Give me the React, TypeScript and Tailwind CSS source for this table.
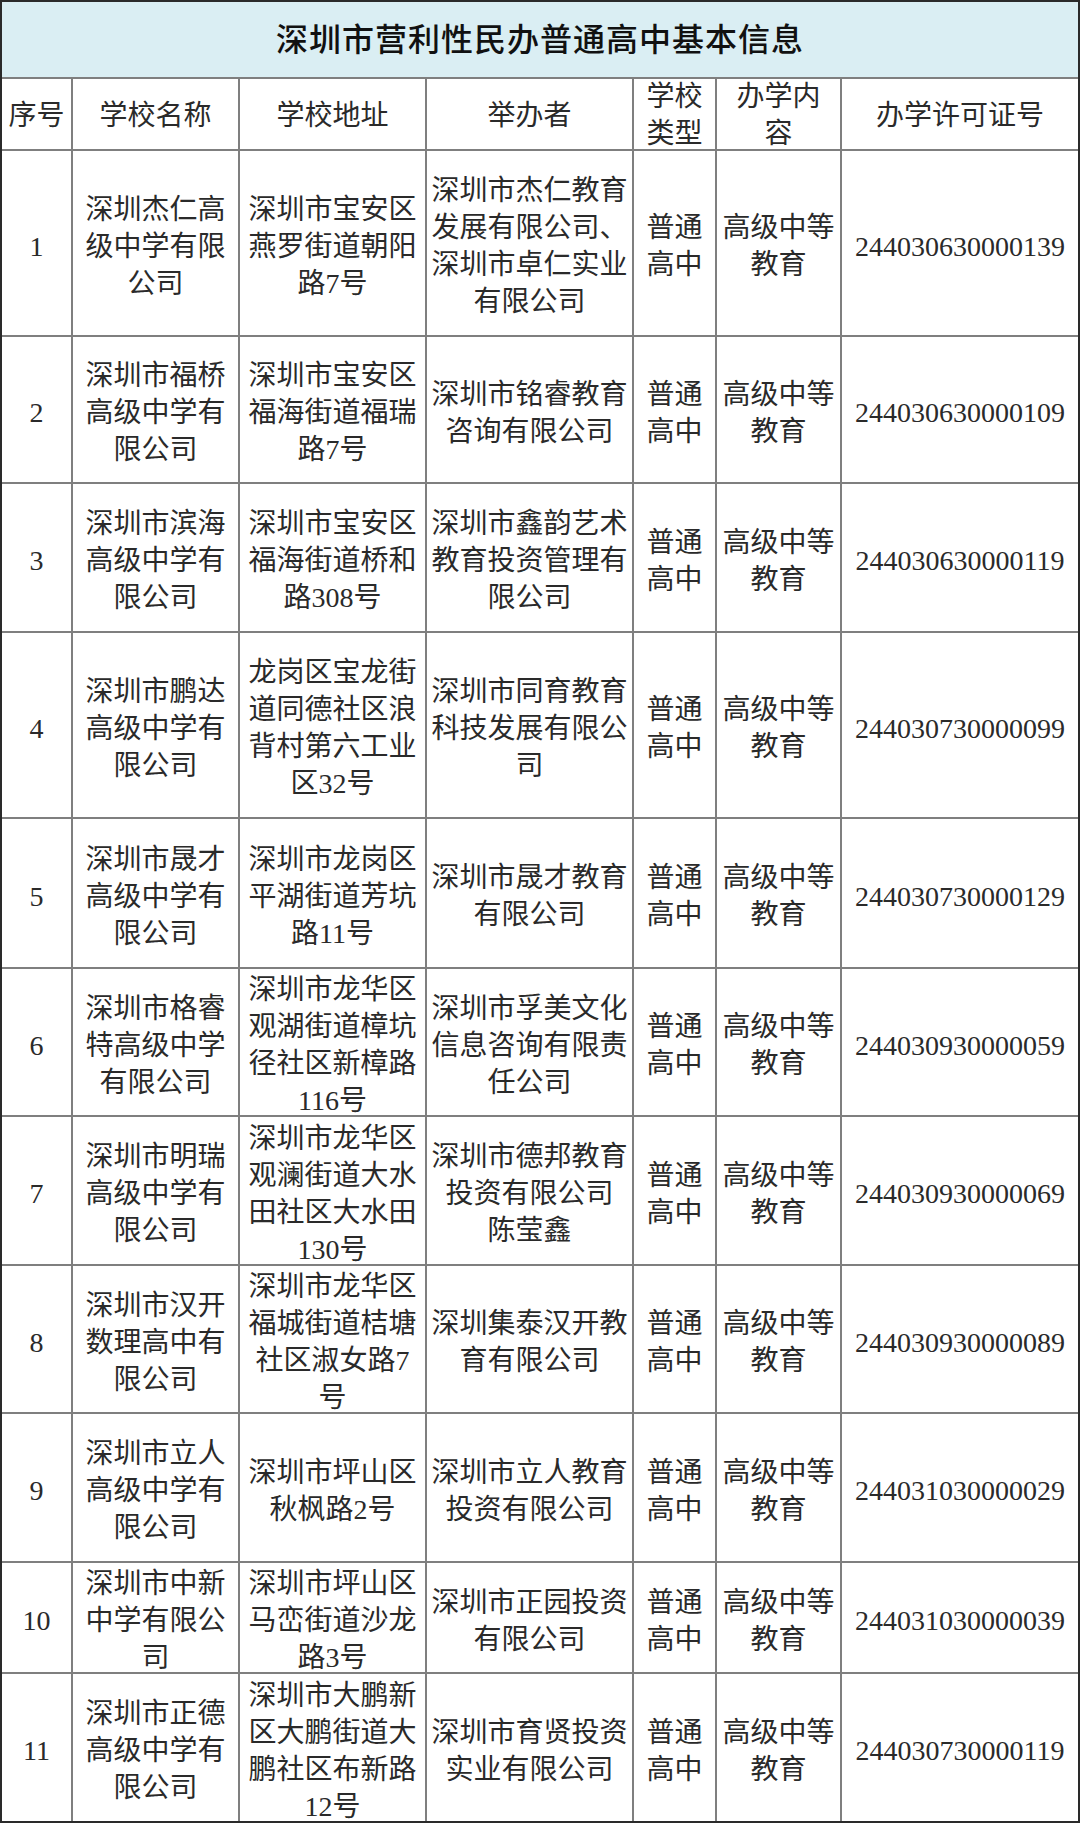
const cols = "grid grid-rows-1 grid-cols-[71px_167px_187px_207px_83px_125px_236px]";

type Row = {
  h: string;
  no: string;
  name: string[];
  addr: string[];
  host: string[];
  license: string;
};

const rows: Row[] = [
  {
    h: "h-[186px]",
    no: "1",
    name: ["深圳杰仁高", "级中学有限", "公司"],
    addr: ["深圳市宝安区", "燕罗街道朝阳", "路7号"],
    host: ["深圳市杰仁教育", "发展有限公司、", "深圳市卓仁实业", "有限公司"],
    license: "244030630000139",
  },
  {
    h: "h-[147px]",
    no: "2",
    name: ["深圳市福桥", "高级中学有", "限公司"],
    addr: ["深圳市宝安区", "福海街道福瑞", "路7号"],
    host: ["深圳市铭睿教育", "咨询有限公司"],
    license: "244030630000109",
  },
  {
    h: "h-[149px]",
    no: "3",
    name: ["深圳市滨海", "高级中学有", "限公司"],
    addr: ["深圳市宝安区", "福海街道桥和", "路308号"],
    host: ["深圳市鑫韵艺术", "教育投资管理有", "限公司"],
    license: "244030630000119",
  },
  {
    h: "h-[186px]",
    no: "4",
    name: ["深圳市鹏达", "高级中学有", "限公司"],
    addr: ["龙岗区宝龙街", "道同德社区浪", "背村第六工业", "区32号"],
    host: ["深圳市同育教育", "科技发展有限公", "司"],
    license: "244030730000099",
  },
  {
    h: "h-[150px]",
    no: "5",
    name: ["深圳市晟才", "高级中学有", "限公司"],
    addr: ["深圳市龙岗区", "平湖街道芳坑", "路11号"],
    host: ["深圳市晟才教育", "有限公司"],
    license: "244030730000129",
  },
  {
    h: "h-[148px]",
    no: "6",
    name: ["深圳市格睿", "特高级中学", "有限公司"],
    addr: ["深圳市龙华区", "观湖街道樟坑", "径社区新樟路", "116号"],
    host: ["深圳市孚美文化", "信息咨询有限责", "任公司"],
    license: "244030930000059",
  },
  {
    h: "h-[149px]",
    no: "7",
    name: ["深圳市明瑞", "高级中学有", "限公司"],
    addr: ["深圳市龙华区", "观澜街道大水", "田社区大水田", "130号"],
    host: ["深圳市德邦教育", "投资有限公司", "陈莹鑫"],
    license: "244030930000069",
  },
  {
    h: "h-[148px]",
    no: "8",
    name: ["深圳市汉开", "数理高中有", "限公司"],
    addr: ["深圳市龙华区", "福城街道桔塘", "社区淑女路7", "号"],
    host: ["深圳集泰汉开教", "育有限公司"],
    license: "244030930000089",
  },
  {
    h: "h-[149px]",
    no: "9",
    name: ["深圳市立人", "高级中学有", "限公司"],
    addr: ["深圳市坪山区", "秋枫路2号"],
    host: ["深圳市立人教育", "投资有限公司"],
    license: "244031030000029",
  },
  {
    h: "h-[111px]",
    no: "10",
    name: ["深圳市中新", "中学有限公", "司"],
    addr: ["深圳市坪山区", "马峦街道沙龙", "路3号"],
    host: ["深圳市正园投资", "有限公司"],
    license: "244031030000039",
  },
  {
    h: "h-[147px]",
    no: "11",
    name: ["深圳市正德", "高级中学有", "限公司"],
    addr: ["深圳市大鹏新", "区大鹏街道大", "鹏社区布新路", "12号"],
    host: ["深圳市育贤投资", "实业有限公司"],
    license: "244030730000119",
  },
];

function Cell({
  lines,
  last,
  bottom,
  body,
}: {
  lines: string[];
  last?: boolean;
  bottom: boolean;
  body?: boolean;
}) {
  return (
    <div
      className={`flex min-h-0 flex-col items-center justify-center text-center border-[#7f7f7f] ${
        last ? "" : "border-r-2"
      } ${bottom ? "border-b-2" : ""} ${body ? "pt-[6px]" : "pt-[2px]"}`}
    >
      {lines.map((l, i) => (
        <div key={i} className="whitespace-nowrap">
          {l}
        </div>
      ))}
    </div>
  );
}

export default function App() {
  return (
    <div className="w-[1080px] bg-white font-['Liberation_Serif','Noto_Sans_CJK_SC',serif] text-[28px] leading-[37px] text-[#2a2a2a]">
      <div className="border-2 border-[#2a2a2a]">
        <div className="flex h-[77px] items-center justify-center border-b-2 border-[#7f7f7f] bg-[#daeef3] pt-[2px] text-[32px] font-medium tracking-[1px] text-[#111]">
          深圳市营利性民办普通高中基本信息
        </div>
        <div className={`${cols} h-[72px]`}>
          <Cell lines={["序号"]} bottom />
          <Cell lines={["学校名称"]} bottom />
          <Cell lines={["学校地址"]} bottom />
          <Cell lines={["举办者"]} bottom />
          <Cell lines={["学校", "类型"]} bottom />
          <Cell lines={["办学内", "容"]} bottom />
          <Cell lines={["办学许可证号"]} bottom last />
        </div>
        {rows.map((r, i) => {
          const bottom = i < rows.length - 1;
          return (
            <div key={r.no} className={`${cols} ${r.h}`}>
              <Cell lines={[r.no]} bottom={bottom} body />
              <Cell lines={r.name} bottom={bottom} body />
              <Cell lines={r.addr} bottom={bottom} body />
              <Cell lines={r.host} bottom={bottom} body />
              <Cell lines={["普通", "高中"]} bottom={bottom} body />
              <Cell lines={["高级中等", "教育"]} bottom={bottom} body />
              <Cell lines={[r.license]} bottom={bottom} body last />
            </div>
          );
        })}
      </div>
    </div>
  );
}
